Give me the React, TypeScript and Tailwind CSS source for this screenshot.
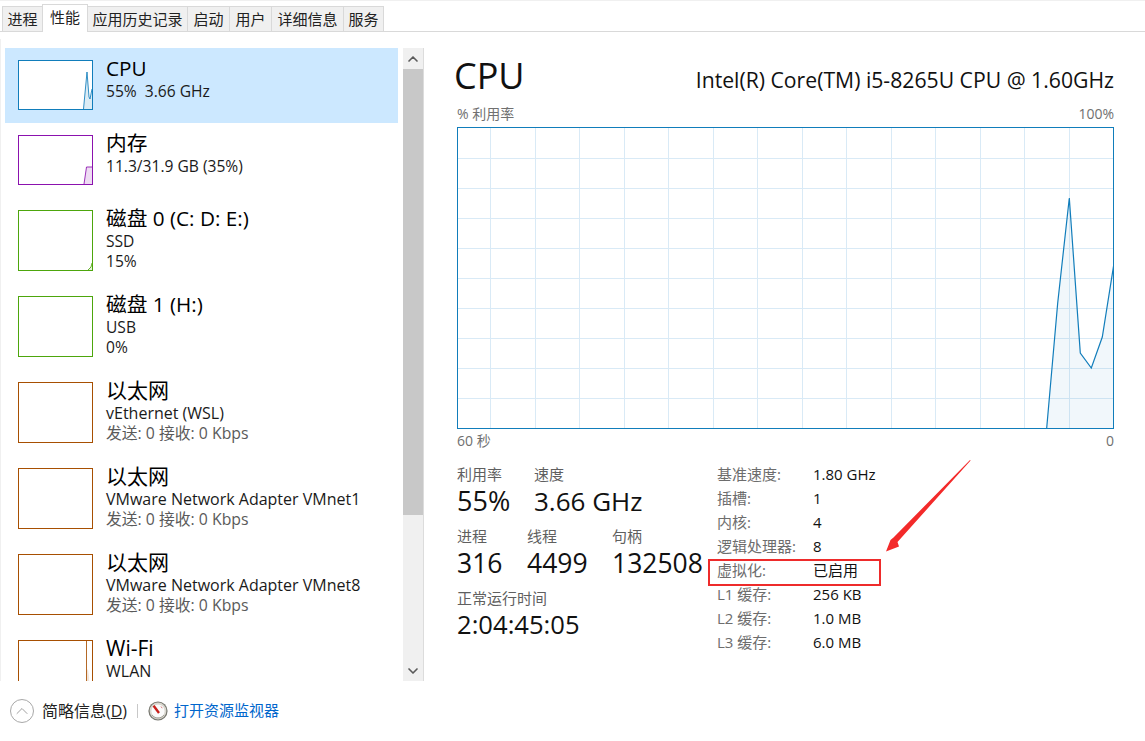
import React from "react";
import { ChevronUp, ChevronDown } from "lucide-react";

const font = { fontFamily: '"Open Sans","Noto Sans CJK SC",sans-serif' };

const tabs = [
  { t: "进程", w: "w-[41px]" },
  { t: "性能", w: "w-[46px]", active: true },
  { t: "应用历史记录", w: "w-[101px]" },
  { t: "启动", w: "w-[43px]" },
  { t: "用户", w: "w-[43px]" },
  { t: "详细信息", w: "w-[73px]" },
  { t: "服务", w: "w-[41px]" },
];

type Item = {
  title: string;
  lines: string[];
  color: string;
  fill: string;
  path?: string;
  area?: string;
  selected?: boolean;
  tall?: boolean;
};

const eth = "border-[#a74f01]";
const items: Item[] = [
  { title: "CPU", lines: ["55%  3.66 GHz"], color: "border-[#117dbb]", fill: "#117dbb", selected: true, path: "M64.5 48 L68 11 L70 36 L71 38 L73 28", area: "M64.5 48 L68 11 L70 36 L71 38 L73 28 L73 48Z" },
  { title: "内存", lines: ["11.3/31.9 GB (35%)"], color: "border-[#8b12ae]", fill: "#8b12ae", path: "M65 48 L67.5 31 L73 31", area: "M65 48 L67.5 31 L73 31 L73 48Z" },
  { title: "磁盘 0 (C: D: E:)", lines: ["SSD", "15%"], color: "border-[#4da60c]", fill: "#4da60c", tall: true, path: "M69 59 L72 56 L73 52", area: "M69 59 L72 56 L73 52 L73 59Z" },
  { title: "磁盘 1 (H:)", lines: ["USB", "0%"], color: "border-[#4da60c]", fill: "#4da60c", tall: true },
  { title: "以太网", lines: ["vEthernet (WSL)", "发送: 0 接收: 0 Kbps"], color: eth, fill: "#a74f01", tall: true },
  { title: "以太网", lines: ["VMware Network Adapter VMnet1", "发送: 0 接收: 0 Kbps"], color: eth, fill: "#a74f01", tall: true },
  { title: "以太网", lines: ["VMware Network Adapter VMnet8", "发送: 0 接收: 0 Kbps"], color: eth, fill: "#a74f01", tall: true },
  { title: "Wi-Fi", lines: ["WLAN", "\u00a0"], color: eth, fill: "#a74f01", tall: true, path: "M67.5 0 L67.5 59", area: "M67.5 30 L69 28 L70 36 L71 59 L67.5 59Z" },
];

function Row({ it }: { it: Item }) {
  const eTh = it.fill === "#a74f01";
  return (
    <div className={`flex shrink-0 items-center pl-[13px] ${it.tall ? "h-[86px]" : "h-[75px]"} ${it.selected ? "bg-[#cce8ff]" : ""}`}>
      <div className={`relative shrink-0 w-[75px] border bg-white mb-px ${it.tall ? "h-[61px]" : "h-[50px]"} ${it.color}`}>
        {it.path && (
          <svg className="absolute inset-0" width="73" height={it.tall ? 59 : 48} viewBox={`0 0 73 ${it.tall ? 59 : 48}`} fill="none">
            {it.area && <path d={it.area} fill={it.fill} fillOpacity="0.15" />}
            <path d={it.path} stroke={it.fill} strokeWidth="1" strokeOpacity="0.85" />
          </svg>
        )}
      </div>
      <div className={`ml-[13px] min-w-0 text-black ${it.tall ? "mb-[6px]" : "mb-[15px]"}`}>
        <div className={`${eTh ? "text-[21px]" : "text-[20.7px]"} leading-[26px] whitespace-nowrap`}>{it.title}</div>
        {it.lines.map((l, i) => (
          <div
            key={i}
            className={`leading-[20px] whitespace-pre ${
              l.startsWith("发送") ? "text-[15.8px] text-[#5a5a5a]" : eTh ? "text-[16px] text-[#1a1a1a]" : "text-[15.6px] text-[#1a1a1a]"
            }`}
          >
            {l}
          </div>
        ))}
      </div>
    </div>
  );
}

function Chart() {
  const vs = [33, 78, 122, 167, 211, 256, 300, 345, 389, 434, 478, 523, 567, 612];
  const hs = [31, 61, 91, 121, 151, 181, 211, 241, 271];
  const pts = "589.7,301 600.7,176 612.3,71 623.3,226 634.3,241 645.3,210 656.7,138";
  return (
    <svg width="657" height="302" viewBox="0 0 657 302" className="block" fill="none">
      {vs.map((x) => <line key={x} x1={x + 0.5} x2={x + 0.5} y1="0" y2="302" stroke="#d9eaf6" />)}
      {hs.map((y) => <line key={y} x1="0" x2="657" y1={y + 0.5} y2={y + 0.5} stroke="#d9eaf6" />)}
      <polygon points={`${pts} 656.7,301`} fill="#117dbb" fillOpacity="0.06" />
      <polyline points={pts} stroke="#117dbb" strokeWidth="1.2" />
      <rect x="0.5" y="0.5" width="656" height="301" stroke="#117dbb" />
    </svg>
  );
}

function Stat({ label, value, w, size }: { label: string; value: string; w: string; size: string }) {
  return (
    <div className={w}>
      <div className="text-[15px] leading-[20px] text-[#5f5f5f] whitespace-nowrap">{label}</div>
      <div className={`${size} mt-px leading-[32px] text-[#111] whitespace-nowrap`}>{value}</div>
    </div>
  );
}

const details = [
  ["基准速度:", "1.80 GHz"],
  ["插槽:", "1"],
  ["内核:", "4"],
  ["逻辑处理器:", "8"],
  ["虚拟化:", "已启用"],
  ["L1 缓存:", "256 KB"],
  ["L2 缓存:", "1.0 MB"],
  ["L3 缓存:", "6.0 MB"],
];

function Gauge() {
  return (
    <svg width="20" height="20" viewBox="0 0 20 20" className="shrink-0">
      <circle cx="10" cy="10" r="9.6" fill="#77776f" />
      <circle cx="10" cy="10" r="8.4" fill="#d9d7cf" />
      <circle cx="10" cy="10" r="6.6" fill="#fbfbfb" />
      <path d="M5.6 4.8 L11 12" stroke="#c8201a" strokeWidth="2.4" />
      <path d="M13 5.5 L14.2 7.2" stroke="#d77" strokeWidth="1" />
      <path d="M4 14 A7.5 7.5 0 0 0 16 14" stroke="#a3a198" strokeWidth="1" fill="none" />
    </svg>
  );
}

export default function App() {
  return (
    <div style={font} className="relative w-[1145px] h-[741px] overflow-hidden bg-white flex flex-col">
      {/* tabs */}
      <div className="h-[32px] shrink-0 border-t border-t-[#f0f0f0] border-b border-b-[#d9d9d9] flex items-end pl-[2px]">
        {tabs.map((t) => (
          <div
            key={t.t}
            className={`${t.w} flex items-center justify-center text-[15px] text-[#222] border-r border-l border-[#d9d9d9] -mr-px shrink-0 ${
              t.active
                ? "relative h-[28px] -mb-px bg-white border-t pb-[3px]"
                : "h-[25px] bg-[#f0f0f0] border-t"
            }`}
          >
            {t.t}
          </div>
        ))}
      </div>

      <div className="flex h-[649px] shrink-0">
        {/* left */}
        <div className="w-[424px] shrink-0 mt-[7px] pt-[9px] border-l border-l-[#f0f0f0] pl-[4px] flex">
          <div className="w-[393px] h-[633px] overflow-hidden flex flex-col shrink-0">
            {items.map((it, i) => <Row key={i} it={it} />)}
          </div>
          <div className="ml-[5px] w-[21px] h-[633px] bg-[#f0f0f0] border-r border-[#dcdcdc] flex flex-col shrink-0">
            <div className="h-[21px] flex items-center justify-center"><ChevronUp size={16} strokeWidth={2.5} className="text-[#5a5a5a]" /></div>
            <div className="h-[446px] bg-[#c8c8c8]" />
            <div className="flex-1" />
            <div className="h-[21px] flex items-center justify-center"><ChevronDown size={16} strokeWidth={2.5} className="text-[#5a5a5a]" /></div>
          </div>
        </div>

        {/* right */}
        <div className="flex-1 min-w-0 pl-[33px] pr-[31px] pt-[16px]">
          <div className="flex items-baseline justify-between h-[56px]">
            <div className="text-[36px] leading-[56px] text-[#111] -ml-[3px]">CPU</div>
            <div className="text-[21.2px] text-[#111] -translate-y-px whitespace-nowrap">Intel(R) Core(TM) i5-8265U CPU @ 1.60GHz</div>
          </div>
          <div className="flex justify-between text-[14px] leading-[20px] text-[#707070] h-[23px]">
            <span>% 利用率</span>
            <span>100%</span>
          </div>
          <Chart />
          <div className="flex justify-between text-[14px] leading-[24px] text-[#707070] h-[24px]">
            <span>60 秒</span>
            <span>0</span>
          </div>
          <div className="flex mt-[11px]">
            <div className="w-[259px] shrink-0">
              <div className="flex">
                <Stat label="利用率" value="55%" w="w-[77px]" size="text-[27px]" />
                <Stat label="速度" value="3.66 GHz" w="w-[150px]" size="text-[26px]" />
              </div>
              <div className="flex mt-[9px]">
                <Stat label="进程" value="316" w="w-[70px]" size="text-[26.5px]" />
                <Stat label="线程" value="4499" w="w-[85px]" size="text-[26.5px]" />
                <Stat label="句柄" value="132508" w="w-[90px]" size="text-[26.5px]" />
              </div>
              <div className="mt-[9px]">
                <Stat label="正常运行时间" value="2:04:45:05" w="w-[200px]" size="text-[25.6px]" />
              </div>
            </div>
            <div className="text-[15px] -mt-[2px]">
              {details.map(([a, b]) => (
                <div key={a} className="flex h-[24px] items-center">
                  <div className="ml-px w-[96px] text-[#6d6d6d] whitespace-nowrap">{a}</div>
                  <div className="text-[#111] whitespace-nowrap">{b}</div>
                </div>
              ))}
            </div>
          </div>
        </div>
      </div>

      {/* footer */}
      <div className="flex-1 flex items-center pl-[10px] pb-[1px] text-[16px]">
        <div className="w-[24px] h-[24px] rounded-full border border-[#a8a8a8] flex items-center justify-center">
          <ChevronUp size={20} strokeWidth={1.2} className="text-[#a0a0a0]" />
        </div>
        <span className="ml-[8px] w-[87px] text-[#222] whitespace-nowrap">简略信息(<span className="underline">D</span>)</span>
        <div className="ml-[8px] w-px h-[14px] bg-[#c8c8c8]" />
        <div className="ml-[10px]"><Gauge /></div>
        <span className="ml-[6px] text-[15px] text-[#0066cc]">打开资源监视器</span>
      </div>

      {/* annotation */}
      <div className="absolute left-[708px] top-[559px] w-[173px] h-[27px] border-2 border-[#ee2b2b]" />
      <svg className="absolute left-[880px] top-[455px]" width="96" height="102" viewBox="0 0 96 102" fill="none">
        <path d="M6 96.5 L10.5 85 L13.5 82.5 L90 5 L90.6 5.6 L17.5 87 L19 91.5Z" fill="#f32a2a" />
      </svg>
    </div>
  );
}
